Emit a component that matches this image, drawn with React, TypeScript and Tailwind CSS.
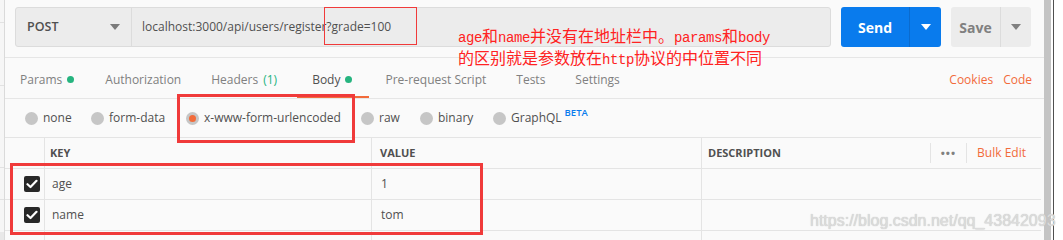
import React from "react";

const font = { fontFamily: '"Open Sans", "Liberation Sans", sans-serif' };

function Caret({ color }: { color: string }) {
  return (
    <svg width="10" height="6" viewBox="0 0 10 6">
      <path d="M0 0 L10 0 L5 6 Z" fill={color} />
    </svg>
  );
}

function Radio({ label, selected }: { label: string; selected?: boolean }) {
  return (
    <div className="flex items-center gap-[5px]">
      <div className="w-[13px] h-[13px] rounded-full bg-[#c6c6c6] flex items-center justify-center">
        {selected && <div className="w-[7px] h-[7px] rounded-full bg-[#f26b3a]" />}
      </div>
      <span className="text-[12px] text-[#505050]">{label}</span>
    </div>
  );
}

function Check() {
  return (
    <div className="w-[16px] h-[16px] rounded-[2px] bg-[#282828] flex items-center justify-center">
      <svg width="12" height="10" viewBox="0 0 12 10">
        <path d="M1.5 5.2 L4.5 8 L10.5 1.8" stroke="#fff" strokeWidth="2.2" fill="none" strokeLinecap="round" strokeLinejoin="round" />
      </svg>
    </div>
  );
}

function Row({ k, v }: { k: string; v: string }) {
  return (
    <div className="flex shrink-0 h-[31px] border-b border-[#e4e4e4]">
      <div className="w-[40px] border-r border-[#e4e4e4] flex items-center justify-end pr-[4px]">
        <Check />
      </div>
      <div className="w-[327px] border-r border-[#e4e4e4] flex items-center pl-[7px] text-[12px] text-[#505050]">{k}</div>
      <div className="w-[330px] border-r border-[#e4e4e4] flex items-center pl-[9px] text-[12px] text-[#505050]">{v}</div>
      <div className="flex-1" />
    </div>
  );
}

const mono = { fontFamily: '"Liberation Mono", monospace' };

export default function App() {
  return (
    <div className="relative w-[1063px] h-[240px] overflow-hidden bg-white flex" style={font}>
      {/* left strip */}
      <div className="w-[5px] h-full shrink-0 border-r border-[#dadada] bg-[#f6f6f6] flex flex-col">
        <div className="h-[23px] shrink-0 border-b border-[#e2e2e2]" />
        <div className="h-[63px] shrink-0 border-b border-[#e2e2e2]" />
        <div className="h-[82px] shrink-0 border-b border-[#e2e2e2]" />
        <div className="h-[32px] shrink-0 border-b border-[#e2e2e2]" />
        <div className="h-[32px] shrink-0" />
        <div className="flex-1 bg-[#e8e8e8]" />
      </div>

      {/* main panel */}
      <div className="w-[1039px] shrink-0 h-full bg-[#fafafa] flex flex-col">
        {/* top bar */}
        <div className="h-[58px] shrink-0 border-b border-[#e6e6e6] flex items-start pt-[7px] pl-[10px]">
          <div className="flex h-[40px] w-[816px] rounded-[3px] border border-[#dcdcdc] bg-[#ececec]">
            <div className="w-[116px] border-r border-[#dcdcdc] flex items-center justify-between pl-[11px] pr-[11px]">
              <span className="text-[12.5px] font-semibold text-[#505050]">POST</span>
              <Caret color="#7a7a7a" />
            </div>
            <div className="flex-1 flex items-center pl-[10px] text-[12px] text-[#505050]">
              localhost:3000/api/users/register?grade=100
            </div>
          </div>
          <div className="ml-[10px] flex h-[40px] w-[100px] rounded-[3px] bg-[#097bed]">
            <div className="w-[69px] border-r border-[#0a6bcf] flex items-center justify-center text-[14px] font-bold text-white">
              Send
            </div>
            <div className="flex-1 flex items-center justify-center">
              <Caret color="#ffffff" />
            </div>
          </div>
          <div className="ml-[10px] flex h-[40px] w-[80px] rounded-[3px] bg-[#ececec]">
            <div className="w-[50px] border-r border-[#dcdcdc] flex items-center justify-center text-[14px] font-bold text-[#808080]">
              Save
            </div>
            <div className="flex-1 flex items-center justify-center">
              <Caret color="#808080" />
            </div>
          </div>
        </div>

        {/* tabs */}
        <div className="h-[41px] shrink-0 border-b border-[#e6e6e6] flex items-stretch pl-[15px] pr-[12px] text-[12px]">
          <div className="flex items-center gap-[5px] pt-[3px] text-[#808080]">
            Params <span className="w-[7px] h-[7px] rounded-full bg-[#26b47f]" />
          </div>
          <div className="ml-[31px] flex items-center pt-[3px] text-[#808080]">Authorization</div>
          <div className="ml-[30px] flex items-center pt-[3px] text-[#808080]">
            Headers <span className="ml-[5px] text-[#26b47f]">(1)</span>
          </div>
          <div className="ml-[20px] pl-[15px] pr-[17px] flex items-center gap-[5px] pt-[5px] text-[#505050] border-b-[2px] border-[#f26b3a]">
            Body <span className="w-[7px] h-[7px] rounded-full bg-[#26b47f]" />
          </div>
          <div className="ml-[16px] flex items-center pt-[3px] text-[#808080]">Pre-request Script</div>
          <div className="ml-[30px] flex items-center pt-[3px] text-[#808080]">Tests</div>
          <div className="ml-[30px] flex items-center pt-[3px] text-[#808080]">Settings</div>
          <div className="ml-auto flex items-center gap-[10px] pt-[3px] text-[#f26b3a]">
            <span>Cookies</span>
            <span>Code</span>
          </div>
        </div>

        {/* radio row */}
        <div className="h-[38px] shrink-0 flex items-center pl-[20px]">
          <div className="w-[66px]"><Radio label="none" /></div>
          <div className="w-[95px]"><Radio label="form-data" /></div>
          <div className="w-[175px]"><Radio label="x-www-form-urlencoded" selected /></div>
          <div className="w-[59px]"><Radio label="raw" /></div>
          <div className="w-[73px]"><Radio label="binary" /></div>
          <div className="flex items-center">
            <Radio label="GraphQL" />
            <span className="ml-[3px] -mt-[10px] text-[9.5px] font-semibold text-[#097bed]">BETA</span>
          </div>
        </div>

        {/* table */}
        <div className="w-[1036px] shrink-0 border-t border-[#e4e4e4]">
          <div className="flex h-[31px] border-b border-[#e4e4e4]">
            <div className="w-[40px] border-r border-[#e4e4e4]" />
            <div className="w-[327px] border-r border-[#e4e4e4] flex items-center pl-[5px] text-[11px] font-bold text-[#505050]">KEY</div>
            <div className="w-[330px] border-r border-[#e4e4e4] flex items-center pl-[8px] text-[11px] font-bold text-[#505050]">VALUE</div>
            <div className="flex-1 flex items-center pl-[6px] text-[11px] font-bold text-[#505050]">
              <span>DESCRIPTION</span>
              <div className="ml-auto flex items-center h-[20px]">
                <div className="h-full border-l border-[#e4e4e4] px-[10px] flex items-center text-[#808080] text-[11px] tracking-[1px]">•••</div>
                <div className="h-full border-l border-[#e4e4e4] pl-[10px] pr-[15px] flex items-center text-[12px] font-normal text-[#f26b3a]">Bulk Edit</div>
              </div>
            </div>
          </div>
          <Row k="age" v="1" />
          <Row k="name" v="tom" />
          <div className="flex h-[31px]">
            <div className="w-[40px] border-r border-[#e4e4e4]" />
            <div className="w-[327px] border-r border-[#e4e4e4]" />
            <div className="w-[330px] border-r border-[#e4e4e4]" />
          </div>
        </div>
      </div>

      {/* scrollbar & right edge */}
      <div className="w-[7px] shrink-0 h-full bg-[#c4c4c4]" />
      <div className="w-[2px] shrink-0 h-full bg-white" />
      <div className="w-[1px] shrink-0 h-full bg-[#505050]" />
      <div className="flex-1 h-full bg-white" />

      {/* annotations */}
      <div className="absolute left-[324px] top-[7px] w-[93px] h-[38px] border border-[#f03a3a]" />
      <div className="absolute left-[177px] top-[94px] w-[178px] h-[49px] border-[3px] border-[#f03a3a]" />
      <div className="absolute left-[10px] top-[163px] w-[473px] h-[72px] border-[3px] border-[#f03a3a]" />

      <div
        className="absolute left-[458px] top-[26px] text-[16px] leading-[19px] text-[#f22] whitespace-nowrap"
        style={{ fontFamily: '"Noto Sans CJK SC", sans-serif' }}
      >
        <div>
          <span style={mono} className="text-[14px] tracking-[-0.4px]">age</span>和
          <span style={mono} className="text-[14px] tracking-[-0.4px]">name</span>并没有在地址栏中。
          <span style={mono} className="text-[14px] tracking-[-0.4px]">params</span>和
          <span style={mono} className="text-[14px] tracking-[-0.4px]">body</span>
        </div>
        <div>
          的区别就是参数放在<span style={mono} className="text-[14px] tracking-[-0.4px]">http</span>协议的中位置不同
        </div>
      </div>

      <div
        className="absolute left-[810px] top-[209px] text-[16px] text-[#dcdcdc] whitespace-nowrap"
        style={{ fontFamily: '"Liberation Sans", Arial, sans-serif', textShadow: "0 0 1px #b8b8b8" }}
      >
        https://blog.csdn.net/qq_43842093
      </div>
    </div>
  );
}
